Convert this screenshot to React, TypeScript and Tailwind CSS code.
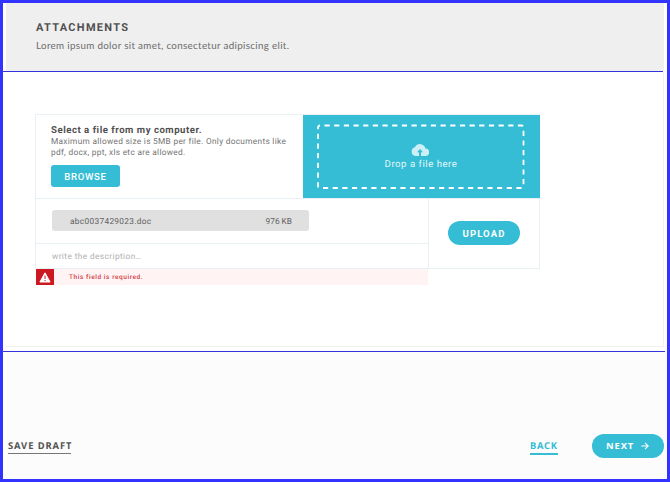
function CloudUpload() {
  return (
    <svg className="h-[12px] w-[18px]" viewBox="0 0 18 12">
      <path
        d="M14.5 4.6A5.6 5.6 0 0 0 4 3.2 4.5 4.5 0 0 0 4.5 12h10a3.7 3.7 0 0 0 0-7.4Z"
        fill="#cdeff5"
      />
      <path d="M9 5.1 12 8.3H10V12H8V8.3H6Z" fill="#34bdd4" />
    </svg>
  );
}

function Warning() {
  return (
    <svg className="h-[11px] w-[12px]" viewBox="0 0 12 11">
      <path d="M6 .8 11.1 10H.9Z" fill="#fff" stroke="#fff" strokeWidth="1" strokeLinejoin="round" />
      <path d="M6 3.6V7M6 8v1.1" stroke="#cc1820" strokeWidth="1" />
    </svg>
  );
}

function Arrow() {
  return (
    <svg className="h-[8px] w-[8px]" viewBox="0 0 8 8" fill="none" stroke="#fff" strokeWidth="1.1">
      <path d="M.3 4h6.8M4 .8 7.2 4 4 7.2" />
    </svg>
  );
}

function Header() {
  return (
    <header className="mr-[3px] ml-[3px] h-[68px] bg-[#efefef] pt-[18px] pl-[30px]">
      <h1 className="font-['Roboto',sans-serif] text-[11px] leading-[13px] font-bold tracking-[1.3px] text-[#505050]">
        ATTACHMENTS
      </h1>
      <p className="mt-[6px] font-['Lato',sans-serif] text-[9.8px] leading-[13px] tracking-[0.33px] text-[#6c6c6c]">
        Lorem ipsum dolor sit amet, consectetur adipiscing elit.
      </p>
    </header>
  );
}

function FilePicker() {
  return (
    <div className="flex h-[84px] border-b border-[#e8f0f3]">
      <div className="w-[267px] shrink-0 pt-[10px] pl-[15px] font-['Roboto',sans-serif] whitespace-nowrap">
        <h2 className="text-[9.6px] leading-[12px] font-bold tracking-[0.52px] text-[#505050]">
          Select a file from my computer.
        </h2>
        <p className="text-[8.3px] leading-[11px] tracking-[0.3px] text-[#747474]">
          Maximum allowed size is 5MB per file. Only documents like
          <br />
          pdf, docx, ppt, xls etc are allowed.
        </p>
        <button className="mt-[6px] block h-[22px] w-[69px] rounded-[3px] bg-[#34bdd4] pt-px text-[9.6px] leading-[22px] font-medium tracking-[0.65px] text-white">
          BROWSE
        </button>
      </div>
      <div className="relative flex w-[237px] shrink-0 flex-col items-center bg-[#34bdd4] pt-[29px]">
        <svg className="absolute top-[9px] left-[13px] h-[66px] w-[210px]" fill="none">
          <rect x="2" y="1.5" width="205.5" height="62.5" rx="2" stroke="#fff" strokeWidth="1.8" strokeDasharray="5.2 4.47" strokeDashoffset="-4.5" />
        </svg>
        <div className="-ml-[3px]">
          <CloudUpload />
        </div>
        <span className="mt-[3px] -ml-[1px] font-['Roboto',sans-serif] text-[9.6px] leading-[12px] tracking-[0.53px] text-[#e4f7fa]">
          Drop a file here
        </span>
      </div>
    </div>
  );
}

function UploadRow() {
  return (
    <div className="flex h-[69px]">
      <div className="w-[393px] border-r border-[#e8f0f3] font-['Roboto',sans-serif]">
        <div className="h-[45px] border-b border-[#e8f2f5] pt-[11px] pl-[16px]">
          <div className="flex h-[21px] w-[257px] items-center justify-between rounded-[3px] bg-[#e0e0e0] pt-[2px] pr-[17px] pl-[18px] text-[8.3px] leading-[12px] text-[#606060]">
            <span className="tracking-[0.32px]">abc0037429023.doc</span>
            <span>976 KB</span>
          </div>
        </div>
        <div className="pt-px pl-[16px] text-[8.3px] leading-[24px] tracking-[0.4px] text-[#b0b0b0]">
          write the description…
        </div>
      </div>
      <div className="flex flex-1 items-center justify-center">
        <button className="mb-[1px] h-[24px] w-[72px] rounded-full bg-[#34bdd4] pt-px font-['Roboto',sans-serif] text-[9.5px] leading-[23px] font-bold tracking-[1.1px] text-white">
          UPLOAD
        </button>
      </div>
    </div>
  );
}

function FieldError() {
  return (
    <div className="ml-[33px] flex h-[16px] w-[392px] items-center bg-[#fff4f3]">
      <div className="flex h-[16px] w-[18px] items-center justify-center bg-[#cc1820]">
        <Warning />
      </div>
      <span className="ml-[15px] pt-px font-['Roboto',sans-serif] text-[6.5px] leading-[17px] font-medium tracking-[0.57px] text-[#d03c45]">
        This field is required.
      </span>
    </div>
  );
}

function Footer() {
  return (
    <footer className="ml-[3px] flex h-[127px] items-start bg-[#fcfcfc] pt-[82px] pl-[2px] font-['Noto_Sans',sans-serif] font-bold">
      <a className="mt-[5px] h-[15px] w-[63px] border-b border-[#777] text-[9.4px] leading-[13px] tracking-[0.92px] whitespace-nowrap text-[#545454]">
        SAVE DRAFT
      </a>
      <a className="mt-[5px] ml-[459px] h-[16px] w-[28px] border-b-2 border-[#34bdd4] text-[9.4px] leading-[13px] tracking-[0.7px] whitespace-nowrap text-[#34bdd4]">
        BACK
      </a>
      <button className="ml-[34px] flex h-[24px] w-[72px] items-center rounded-full bg-[#34bdd4] pl-[14px] text-[9.4px] tracking-[0.9px] text-white">
        <span className="w-[35px] pt-px text-left">NEXT</span>
        <Arrow />
      </button>
    </footer>
  );
}

export default function App() {
  return (
    <div className="h-[482px] w-[670px] overflow-hidden border-[3px] border-[#3333ff] bg-white [text-rendering:geometricPrecision]">
      <Header />
      <main className="h-[281px]">
        <div className="h-px w-[660px] bg-[#3333dd]" />
        <div className="mr-[3px] ml-[3px] h-[275px] border-r border-b border-[#f1f1f1] pt-[42px]">
          <div className="-ml-[3px]">
            <div className="ml-[32px] w-[505px] border border-[#e8f0f3]">
              <FilePicker />
              <UploadRow />
            </div>
            <FieldError />
          </div>
        </div>
        <div className="mt-[4px] h-px w-[662px] bg-[#3333dd]" />
      </main>
      <Footer />
    </div>
  );
}
